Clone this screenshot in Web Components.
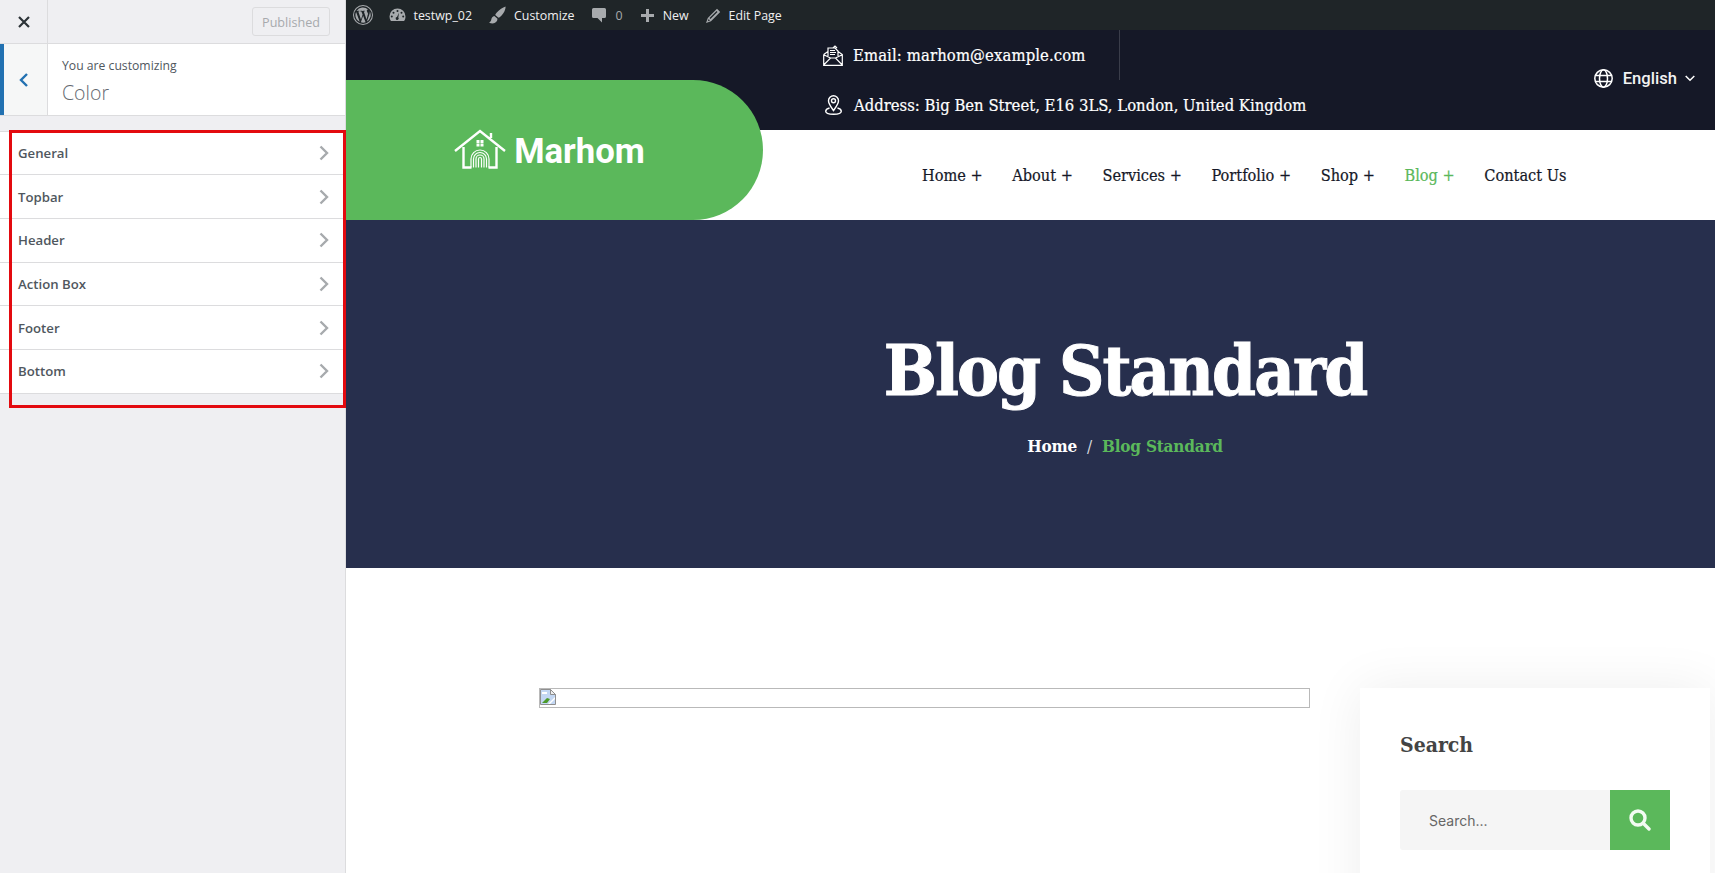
<!DOCTYPE html>
<html lang="en">
<head>
<meta charset="utf-8">
<title>Customize: Color</title>
<style>
  html, body { margin: 0; height: 873px; overflow: hidden; background: #fff; }
  body { display: flex; font-family: "Open Sans", sans-serif; }
  .preview { flex: 1; min-width: 0; display: flex; flex-direction: column; }
</style>
</head>
<body>
  <cz-sidebar title-text="Color">
    <cz-row>General</cz-row>
    <cz-row>Topbar</cz-row>
    <cz-row>Header</cz-row>
    <cz-row>Action Box</cz-row>
    <cz-row>Footer</cz-row>
    <cz-row>Bottom</cz-row>
  </cz-sidebar>
  <div class="preview">
    <wp-adminbar></wp-adminbar>
    <site-header></site-header>
    <page-hero heading="Blog Standard"></page-hero>
    <blog-main></blog-main>
  </div>

<script>
const chevron = `<svg width="10" height="16" viewBox="0 0 10 16" fill="none" stroke="currentColor" stroke-width="2.4"><path d="M1.500 1.500 8 8l-6.500 6.500"/></svg>`;
const slab = `"DejaVu Serif Condensed", "DejaVu Serif", serif`;

class CzRow extends HTMLElement {
  constructor() {
    super();
    this.attachShadow({mode: 'open'}).innerHTML = `
      <style>
        :host {
          display: flex;
          align-items: center;
          justify-content: space-between;
          box-sizing: border-box;
          height: 43.7px;
          padding: 0 16px 0 18px;
          background: #fff;
          border-bottom: 1px solid #dcdcde;
          color: #50575e;
          font: 600 13.2px "Open Sans", sans-serif;
        }
        span { color: #a7aaad; display: flex; }
      </style>
      <slot></slot>
      <span>${chevron}</span>`;
  }
}
customElements.define('cz-row', CzRow);

class CzSidebar extends HTMLElement {
  constructor() {
    super();
    this.attachShadow({mode: 'open'}).innerHTML = `
      <style>
        :host {
          display: block;
          position: relative;
          box-sizing: border-box;
          width: 346px;
          flex: none;
          background: #efeff2;
          border-right: 1px solid #dcdcde;
        }
        .top { display: flex; height: 43px; border-bottom: 1px solid #dcdcde; }
        .close { width: 47px; border-right: 1px solid #dcdcde; display: flex; align-items: center; justify-content: center; color: #2c3338; }
        .published {
          margin: 7px 15px 0 auto;
          box-sizing: border-box;
          width: 78px;
          height: 29px;
          padding-top: 1px;
          border: 1px solid #dcdcde;
          border-radius: 3px;
          display: flex;
          align-items: center;
          justify-content: center;
          color: #a7aaad;
          font-size: 12.6px;
        }
        .info { display: flex; height: 71px; background: #fff; border-bottom: 1px solid #dcdcde; }
        .back {
          box-sizing: border-box;
          width: 48px;
          padding-right: 4px;
          background: #f6f7f7;
          border-left: 4px solid #2271b1;
          border-right: 1px solid #dcdcde;
          display: flex;
          align-items: center;
          justify-content: center;
          color: #2271b1;
        }
        .text { padding: 13px 0 0 14px; color: #50575e; }
        .sub { font-size: 12.2px; line-height: 18px; }
        .name { font-size: 19.5px; font-weight: 300; line-height: 28px; margin-top: 4px; color: #646970; }
        .rows { margin-top: 14.500px; border-top: 1px solid #dcdcde; }
        .mark { position: absolute; left: 9px; top: 130px; width: 337px; height: 278px; box-sizing: border-box; border: 3px solid #e30a0f; }
      </style>
      <div class="top">
        <div class="close"><svg width="14" height="14" viewBox="0 0 14 14" stroke="currentColor" stroke-width="2.200"><path d="M2 2l10 10M12 2 2 12"/></svg></div>
        <div class="published">Published</div>
      </div>
      <div class="info">
        <div class="back"><svg width="10" height="16" viewBox="0 0 10 16" fill="none" stroke="currentColor" stroke-width="2.400"><path d="M8 2 2 8l6 6"/></svg></div>
        <div class="text">
          <div class="sub">You are customizing</div>
          <div class="name">${this.getAttribute('title-text')}</div>
        </div>
      </div>
      <div class="rows"><slot></slot></div>
      <div class="mark"></div>`;
  }
}
customElements.define('cz-sidebar', CzSidebar);

class BarItem extends HTMLElement {
  constructor() {
    super();
    this.attachShadow({mode: 'open'}).innerHTML = `
      <style>
        :host { display: flex; align-items: center; gap: 8px; color: #f0f0f1; font: 12.4px "Open Sans", sans-serif; }
        ::slotted(svg) { fill: #a7aaad; display: block; }
      </style>
      <slot name="icon"></slot><slot></slot>`;
  }
}
customElements.define('bar-item', BarItem);

class WpAdminbar extends HTMLElement {
  constructor() {
    super();
    this.attachShadow({mode: 'open'}).innerHTML = `
      <style>
        :host {
          display: flex;
          align-items: center;
          gap: 17px;
          height: 30px;
          flex: none;
          padding-left: 7px;
          background: #1f2528;
        }
        .muted { color: #a7aaad; }
        .wp { margin-right: -1.5px; }
      </style>
      <bar-item class="wp">
        <svg slot="icon" width="20" height="20" viewBox="0 0 20 20"><path fill-rule="evenodd" d="M10 0a10 10 0 1 1 0 20 10 10 0 0 1 0-20zm0 1a9 9 0 1 0 0 18 9 9 0 0 0 0-18zM2.400 10a7.600 7.600 0 0 0 4.300 6.800L3.100 6.900A7.600 7.600 0 0 0 2.400 10zm12.700-.4c0-.9-.3-1.600-.6-2.100-.4-.6-.7-1.100-.7-1.700 0-.7.5-1.300 1.200-1.300h.1A7.600 7.600 0 0 0 3.600 5.900h.5c.8 0 2-.1 2-.1.4 0 .5.6 0 .6l-.8.1 2.700 8 1.600-4.900-1.200-3.100-.8-.1c-.4 0-.4-.6 0-.6 0 0 1.300.1 2 .1.8 0 2-.1 2-.1.4 0 .5.6 0 .6l-.8.1 2.700 7.900.7-2.500c.3-.9.5-1.700.5-2.300zM10.100 10.700l-2.200 6.600a7.600 7.600 0 0 0 4.700-.1l-.1-.1zM16.700 6.300c0 .3.100.6.100.9 0 .8-.2 1.700-.6 2.800l-2.300 6.600A7.600 7.600 0 0 0 16.700 6.300z"/></svg>
      </bar-item>
      <bar-item>
        <svg slot="icon" width="17" height="16" viewBox="0 0 17 16"><path fill-rule="evenodd" d="M8.500 1.500a8 8 0 0 1 8 8c0 1.700-.5 3.200-1.400 4.500H1.900A8 8 0 0 1 .5 9.500a8 8 0 0 1 8-8zM8.500 3a1 1 0 1 0 0 2 1 1 0 0 0 0-2zM4.500 4.700a1 1 0 1 0 0 2 1 1 0 0 0 0-2zM12.500 4.700a1 1 0 1 0 0 2 1 1 0 0 0 0-2zM2.800 8.500a1 1 0 1 0 0 2 1 1 0 0 0 0-2zM14.200 8.500a1 1 0 1 0 0 2 1 1 0 0 0 0-2zM10 5.800 8 10a1.500 1.500 0 1 0 1.300.5z"/></svg>
        testwp_02
      </bar-item>
      <bar-item>
        <svg slot="icon" width="17" height="18" viewBox="0 0 17 18"><path d="M16.500.5c.4 2.800-1.800 7-4.700 9.800-.7.700-1.500 1.200-2.300 1.500L6.200 9C6.500 8 7 7.200 7.800 6.500 10.500 3.700 13.700 1.300 16.500.5zM5.300 10l3.200 2.800c-.1 2.700-2.100 4.700-4.800 4.700-1.400 0-2.700-.3-3.700-.9 1.600-.5 2-1.700 2.300-3 .3-1.800 1.300-3.300 3-3.600z"/></svg>
        Customize
      </bar-item>
      <bar-item class="muted">
        <svg slot="icon" width="14" height="16" viewBox="0 0 14 16"><path d="M1.500 1h11A1.500 1.500 0 0 1 14 2.500v7a1.500 1.500 0 0 1-1.500 1.500H10v4.500L5.500 11h-4A1.500 1.500 0 0 1 0 9.500v-7A1.500 1.500 0 0 1 1.500 1z"/></svg>
        <span class="muted" style="margin-left:2px">0</span>
      </bar-item>
      <bar-item>
        <svg slot="icon" width="15" height="15" viewBox="0 0 15 15"><path d="M6 1h3v5h5v3H9v5H6V9H1V6h5z"/></svg>
        New
      </bar-item>
      <bar-item>
        <svg slot="icon" width="15" height="15" viewBox="0 0 15 15"><path fill-rule="evenodd" d="M11 .8 14.200 4 5 13.200 0 15l1.800-5zM10.600 3 3.500 10.100l.9.900 7.100-7.100zM2.700 11l-.9 2.200 2.200-.8z"/></svg>
        Edit Page
      </bar-item>`;
  }
}
customElements.define('wp-adminbar', WpAdminbar);

class SiteHeader extends HTMLElement {
  constructor() {
    super();
    this.attachShadow({mode: 'open'}).innerHTML = `
      <style>
        :host {
          display: grid;
          grid-template-columns: 417px 1fr;
          grid-template-rows: 50px 50px 90px;
          flex: none;
          background: #fff;
        }
        .band { grid-area: 1 / 1 / 3 / 3; background: #151827; }
        .logo {
          grid-area: 2 / 1 / 4 / 2;
          background: #5bb85b;
          border-radius: 0 70px 70px 0;
          display: flex;
          align-items: center;
          justify-content: center;
          gap: 8px;
          color: #fff;
          font: 700 34.7px Roboto, sans-serif;
          padding-right: 10px;
          box-sizing: border-box;
        }
        .logo svg { margin-top: -3px; }
        .logo span { margin-top: 2px; }
        .contact { grid-area: 1 / 2 / 3 / 3; color: #fff; padding-left: 60px; font: 16.5px ${slab}; -webkit-text-stroke: .2px; }
        .line { display: flex; align-items: center; gap: 10px; height: 50px; box-sizing: border-box; }
        .line.first { width: 297px; border-right: 1px solid #3a3d4a; }
        .line.first span { letter-spacing: .12px; }
        .lang {
          grid-area: 1 / 2 / 3 / 3;
          justify-self: end;
          align-self: center;
          margin: -4px 20px 0 0;
          display: flex;
          align-items: center;
          color: #f2f2f2;
          font: 500 16.6px Roboto, sans-serif;
        }
        .lang svg:first-child { margin-right: 10px; }
        .lang svg:last-child { margin-left: 8px; }
        nav {
          grid-area: 3 / 2 / 4 / 3;
          display: flex;
          align-items: center;
          gap: 29.500px;
          padding-left: 159px;
          color: #151827;
          font: 16.2px ${slab};
          -webkit-text-stroke: .2px;
        }
        nav .on { color: #5bb85b; }
      </style>
      <div class="band"></div>
      <div class="logo">
        <svg width="52" height="40" viewBox="0 0 52 40" fill="none" stroke="#fff">
          <path stroke-width="2.400" d="M1 22 26 2l25 20M37 9V4"/>
          <path stroke-width="2.400" d="M9.500 18v20.500h8M42.500 18v20.500h-8"/>
          <path stroke-width="1.200" d="M17 38.500V30a9 9 0 0 1 18 0v8.500M19.500 38.500V30a6.500 6.500 0 0 1 13 0v8.500M22 38.500V30a4 4 0 0 1 8 0v8.500M24.500 38.500V30a1.500 1.500 0 0 1 3 0v8.500"/>
          <path stroke-width="2.800" stroke-dasharray="3 1" d="M22.500 12.500h7M22.500 16h7"/>
        </svg>
        <span>Marhom</span>
      </div>
      <div class="contact">
        <div class="line first">
          <svg width="20" height="21" viewBox="0 0 20 21" fill="none" stroke="#fff" stroke-width="1.200"><path d="M.7 9.500v10.800h18.600V9.500L15 6.500M.7 9.500 5 6.500M.7 20l6.800-7h5l6.800 7M.7 9.800l6.800 3.200M19.300 9.800 12.500 13M5 11V3h7l3 3v5M10 3l2-2 2 2M7 5.500h5M7 7.500h6M7 9.500h5"/></svg>
          <span>Email: marhom@example.com</span>
        </div>
        <div class="line">
          <svg style="margin-left:2px;margin-right:2px" width="17" height="20" viewBox="0 0 17 20" fill="none" stroke="#fff" stroke-width="1.400"><path d="M8.500 15.500C6 12 3.500 9 3.500 5.800a5 5 0 0 1 10 0C13.500 9 11 12 8.500 15.500z"/><circle cx="8.500" cy="5.800" r="2"/><path d="M4.500 13C2 13.700.7 15 .7 16.300.7 18 4 19.300 8.500 19.300s7.800-1.300 7.800-3c0-1.300-1.300-2.600-3.800-3.300"/></svg>
          <span>Address: Big Ben Street, E16 3LS, London, United Kingdom</span>
        </div>
      </div>
      <div class="lang">
        <svg width="19" height="19" viewBox="0 0 19 19" fill="none" stroke="#fff" stroke-width="1.500"><circle cx="9.500" cy="9.500" r="8.700"/><ellipse cx="9.500" cy="9.500" rx="4" ry="8.700"/><path d="M1.500 6.500h16M1.500 12.500h16"/></svg>
        English
        <svg width="10" height="7" viewBox="0 0 10 7" fill="none" stroke="#fff" stroke-width="1.500"><path d="M.7 1 5 5.300 9.300 1"/></svg>
      </div>
      <nav>
        <span>Home +</span><span>About +</span><span>Services +</span><span>Portfolio +</span><span>Shop +</span><span class="on">Blog +</span><span>Contact Us</span>
      </nav>`;
  }
}
customElements.define('site-header', SiteHeader);

class PageHero extends HTMLElement {
  constructor() {
    super();
    const heading = this.getAttribute('heading');
    this.attachShadow({mode: 'open'}).innerHTML = `
      <style>
        :host {
          display: block;
          box-sizing: border-box;
          height: 348px;
          flex: none;
          padding: 111px 0 0 189px;
          background: #272f4d;
          color: #fff;
          text-align: center;
          font-family: ${slab};
          font-weight: 700;
        }
        h1 { margin: 0; font-size: 70px; line-height: 80px; letter-spacing: -2px; -webkit-text-stroke: 1px; }
        .crumbs { margin-top: 22px; font-size: 17px; letter-spacing: -.2px; line-height: 26px; display: flex; justify-content: center; gap: 10px; }
        .sep { font-weight: 400; color: #d5d7de; }
        .on { color: #5bb85b; }
      </style>
      <h1>${heading}</h1>
      <div class="crumbs"><span>Home</span><span class="sep">/</span><span class="on">${heading}</span></div>`;
  }
}
customElements.define('page-hero', PageHero);

class SearchWidget extends HTMLElement {
  constructor() {
    super();
    this.attachShadow({mode: 'open'}).innerHTML = `
      <style>
        :host {
          display: block;
          box-sizing: border-box;
          width: 350px;
          flex: none;
          height: 300px;
          padding: 41px 40px 0;
          background: #fff;
          box-shadow: 0 0 50px rgba(0,0,0,.07);
        }
        h3 { margin: 0 0 29px; color: #444; font: 700 21px/32px ${slab}; }
        .box { display: flex; height: 60px; width: 270px; }
        .field { flex: 1; background: #f5f5f5; border-radius: 3px 0 0 3px; display: flex; align-items: center; padding-left: 29px; color: #666; font: 14px Inter, sans-serif; }
        .go { width: 60px; background: #5bb85b; display: flex; align-items: center; justify-content: center; }
      </style>
      <h3>Search</h3>
      <div class="box">
        <div class="field">Search...</div>
        <div class="go"><svg width="22" height="22" viewBox="0 0 22 22" fill="none" stroke="#f2fbf2" stroke-width="3.400" stroke-linecap="round"><circle cx="9" cy="9" r="7"/><path d="m14.500 14.500 5.500 5.500"/></svg></div>
      </div>`;
  }
}
customElements.define('search-widget', SearchWidget);

class BlogMain extends HTMLElement {
  constructor() {
    super();
    this.attachShadow({mode: 'open'}).innerHTML = `
      <style>
        :host { display: flex; align-items: flex-start; gap: 50px; padding: 120px 0 0 193px; flex: 1; min-height: 0; overflow: hidden; background: #fff; }
        .img { box-sizing: border-box; width: 771px; height: 20px; flex: none; border: 1px solid #b9b9b9; }
        .img svg { display: block; }
      </style>
      <div class="img">
        <svg width="16" height="16" viewBox="0 0 16 16"><path fill="#c3d7f3" stroke="#8f8f8f" d="M.5.500h10l5 5v10H.500z"/><path fill="#fff" d="M2 3h5v2H2z"/><path fill="#4c9a2a" d="M2 14l5-5 3 1-3 4z"/><path fill="#fff" d="M8 15l7-7v2l-5 5z"/><path fill="#eee" stroke="#8f8f8f" d="M10.500.500v5h5z"/></svg>
      </div>
      <search-widget></search-widget>`;
  }
}
customElements.define('blog-main', BlogMain);
</script>
</body>
</html>
